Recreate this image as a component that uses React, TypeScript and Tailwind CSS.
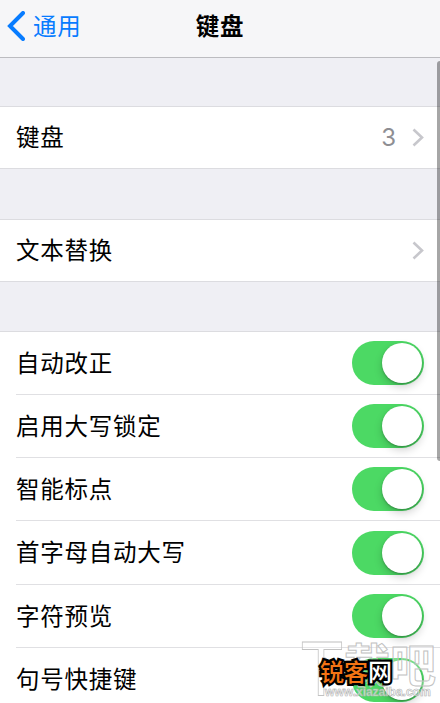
import clsx from 'clsx'

const switches = [
  { label: '自动改正', height: 'h-[63px]' },
  { label: '启用大写锁定', height: 'h-[63px]' },
  { label: '智能标点', height: 'h-[63px]' },
  { label: '首字母自动大写', height: 'h-[64px]' },
  { label: '字符预览', height: 'h-[63px]' },
  { label: '句号快捷键', height: 'h-[63px]' },
]

const Chevron = () => (
  <svg className="block h-[19px] w-[12px]" viewBox="0 0 12 19" fill="none">
    <path d="M1.5 1.5L10 9.5L1.5 17.5" stroke="#c7c7cc" strokeWidth="2.6" />
  </svg>
)

const Switch = () => (
  <div className="flex h-[44px] w-[72px] items-center justify-end rounded-full bg-[#4cd964] pr-[2px]">
    <div className="h-[40px] w-[40px] rounded-full bg-white shadow-[0_4px_8px_rgba(0,0,0,0.18),0_1px_2px_rgba(0,0,0,0.25)]" />
  </div>
)

const LinkRow = ({ label, value }: { label: string; value?: string }) => (
  <div className="flex h-[63px] shrink-0 items-center justify-between border-y border-[#dcdce0] bg-white pr-4 pl-4">
    <span className="pb-[3px]">{label}</span>
    <div className="flex items-center gap-x-4">
      {value && (
        <span className="font-[Inter,sans-serif] text-[24px] tracking-normal text-[#8e8e93]">
          {value}
        </span>
      )}
      <Chevron />
    </div>
  </div>
)

const Watermark = () => (
  <div className="absolute top-[630px] left-[300px] h-[73px] w-[140px]">
    <div className="absolute top-[3px] left-0 flex tracking-normal text-white/25">
      <span className="block w-[44px] origin-top-left scale-x-[0.72] text-[61px] leading-[62px] font-bold [-webkit-text-stroke:1px_#c2c2c2]">
        下
      </span>
      <span className="block text-[46px] leading-[58px] font-bold [-webkit-text-stroke:1px_#c2c2c2]">
        载吧
      </span>
    </div>
    <div className="absolute top-[54px] left-[25px] font-['Liberation_Sans',sans-serif] text-[12.2px] leading-[16px] font-bold tracking-[-0.1px] text-white/60 [-webkit-text-stroke:0.6px_#b0b0b0]">
      www.xiazaiba.com
    </div>
    <div className="absolute top-[22px] left-[20px] text-[24px] leading-[38px] font-medium tracking-normal whitespace-nowrap text-[#f47414] [paint-order:stroke_fill] [-webkit-text-stroke:4.5px_#000]">
      锐客<span className="text-white">网</span>
    </div>
  </div>
)

const App = () => {
  return (
    <div className="relative flex h-[703px] w-[440px] flex-col overflow-hidden bg-[#efeff4] font-['Noto_Sans_CJK_SC',sans-serif] text-[23.5px] leading-[34px] tracking-[0.75px] text-black">
      <header className="grid h-[58px] shrink-0 grid-cols-3 items-center border-b border-[#bcbcc0] bg-[#f6f6f8] pb-[5px]">
        <div className="flex items-center gap-x-[8px] pl-[7px] text-[#087cff]">
          <svg className="block h-[30px] w-[18px]" viewBox="0 0 18 30" fill="none">
            <path
              d="M16 2L3 15L16 28"
              stroke="currentColor"
              strokeWidth="4"
              strokeLinecap="round"
            />
          </svg>
          <span className="pb-[3px]">通用</span>
        </div>
        <h1 className="pb-[2px] text-center font-bold">键盘</h1>
      </header>

      <div className="h-[48px] shrink-0" />
      <LinkRow label="键盘" value="3" />
      <div className="h-[50px] shrink-0" />
      <LinkRow label="文本替换" />
      <div className="h-[49px] shrink-0" />

      <div className="shrink-0 border-t border-[#dcdce0] bg-white">
        {switches.map(({ label, height }, index) => (
          <div key={label} className={clsx('flex pl-4', height)}>
            <div
              className={clsx(
                'flex flex-1 items-center justify-between pr-4',
                index < switches.length - 1 && 'border-b border-[#e0e0e3]'
              )}
            >
              <span className="pb-[3px]">{label}</span>
              <Switch />
            </div>
          </div>
        ))}
      </div>

      <div className="absolute top-[61px] right-0 h-[400px] w-[3px] rounded-l-sm bg-black/35" />
      <Watermark />
    </div>
  )
}

export default App
